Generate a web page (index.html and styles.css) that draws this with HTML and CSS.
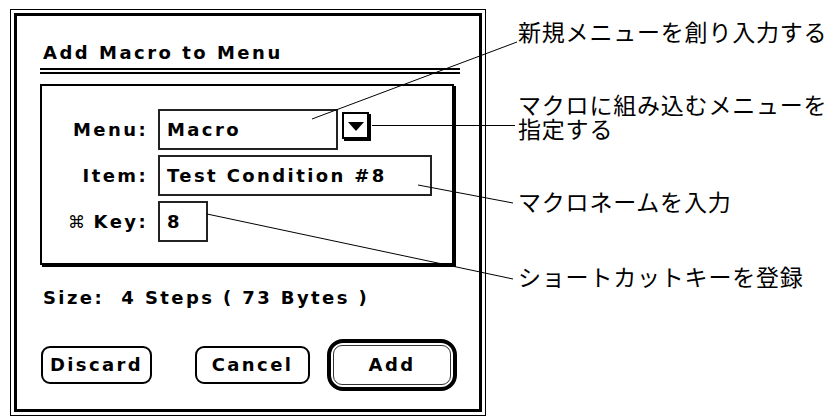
FILE: index.html
```html
<!DOCTYPE html>
<html lang="ja">
<head>
<meta charset="utf-8">
<link rel="stylesheet" href="styles.css">
</head>
<body>
<div class="dialog">
  <div class="frame">
    <div class="title">Add Macro to Menu</div>
    <div class="rule"></div>
    <div class="group">
      <div class="row">
        <div class="label">Menu:</div>
        <div class="field menu-field">Macro</div>
        <div class="popup">
          <svg width="16" height="10" viewBox="0 0 16 10"><polygon points="0,0 16,0 8,9" fill="#000"/></svg>
        </div>
      </div>
      <div class="row">
        <div class="label">Item:</div>
        <div class="field item-field">Test Condition #8</div>
      </div>
      <div class="row">
        <div class="label"><span class="cmd">⌘</span> Key:</div>
        <div class="field key-field">8</div>
      </div>
    </div>
    <div class="size">Size:&nbsp; 4 Steps ( 73 Bytes )</div>
    <div class="buttons">
      <div class="btn discard">Discard</div>
      <div class="btn cancel">Cancel</div>
      <div class="default"><div class="btn add">Add</div></div>
    </div>
  </div>
</div>
<div class="notes">
  <div class="note n1">新規メニューを創り入力する</div>
  <div class="note n2">マクロに組み込むメニューを</div>
  <div class="note n2b">指定する</div>
  <div class="note n3">マクロネームを入力</div>
  <div class="note n4">ショートカットキーを登録</div>
</div>
<svg class="leaders" width="830" height="416" viewBox="0 0 830 416">
  <g stroke="#000" stroke-width="1" fill="none">
    <line x1="312" y1="119" x2="517" y2="42"/>
    <line x1="372" y1="125.5" x2="515" y2="125.5"/>
    <line x1="418" y1="185" x2="513" y2="203"/>
    <line x1="207" y1="214" x2="513" y2="279"/>
  </g>
</svg>
</body>
</html>
```
FILE: styles.css
```css
html, body {
  margin: 0;
  padding: 0;
  background: #fff;
}
body {
  width: 830px;
  height: 416px;
  position: relative;
  overflow: hidden;
  display: flex;
  align-items: flex-start;
  font-family: "DejaVu Sans", "Liberation Sans", sans-serif;
  color: #000;
}
.dialog {
  box-sizing: border-box;
  margin: 9px 0 0 10px;
  width: 476px;
  height: 407px;
  border: 1px solid #000;
  padding: 3px;
  flex: none;
}
.frame {
  box-sizing: border-box;
  height: 100%;
  border: 3px solid #000;
  display: flex;
  flex-direction: column;
}
.title {
  margin: 26px 0 0 26px;
  font-weight: bold;
  font-size: 18px;
  line-height: 22px;
  letter-spacing: 2.5px;
}
.rule {
  margin: 4px 0 0 23px;
  width: 420px;
  height: 2px;
  border-top: 2px solid #000;
  border-bottom: 2px solid #000;
}
.group {
  box-sizing: border-box;
  margin: 10px 0 0 23px;
  width: 414px;
  height: 181px;
  border: 2px solid #000;
  box-shadow: 2px 2px 0 #000;
  padding-top: 23px;
  display: flex;
  flex-direction: column;
  gap: 5px;
}
.row {
  display: flex;
  align-items: flex-start;
  height: 41px;
}
.label {
  width: 106px;
  margin-right: 10px;
  text-align: right;
  font-weight: bold;
  font-size: 18px;
  line-height: 41px;
  letter-spacing: 2.4px;
  flex: none;
  white-space: nowrap;
}
.cmd {
  font-weight: normal;
  font-size: 17px;
  letter-spacing: 0;
}
.field {
  box-sizing: border-box;
  height: 41px;
  border: 2px solid #222;
  padding-left: 7px;
  font-weight: bold;
  font-size: 18px;
  line-height: 37px;
  letter-spacing: 2.4px;
  white-space: nowrap;
  flex: none;
}
.menu-field { width: 180px; }
.item-field { width: 274px; }
.key-field { width: 50px; }
.popup {
  box-sizing: border-box;
  margin: 3px 0 0 4px;
  width: 27px;
  height: 27px;
  border: 2px solid #000;
  box-shadow: 2px 2px 0 #000;
  display: flex;
  justify-content: center;
  padding-top: 8px;
}
.size {
  margin: 22px 0 0 26px;
  font-weight: bold;
  font-size: 18px;
  line-height: 22px;
  letter-spacing: 2.4px;
  white-space: nowrap;
}
.buttons {
  margin: 30px 0 0 24px;
  display: flex;
  align-items: center;
  height: 52px;
}
.btn {
  box-sizing: border-box;
  height: 38px;
  border: 2px solid #000;
  border-radius: 9px;
  text-align: center;
  font-weight: bold;
  font-size: 18px;
  line-height: 34px;
  letter-spacing: 2.4px;
}
.discard { width: 111px; }
.cancel { width: 115px; margin-left: 43px; }
.default {
  box-sizing: border-box;
  margin-left: 17px;
  width: 130px;
  height: 52px;
  border: 4px solid #000;
  border-radius: 16px;
  padding: 2px;
}
.add {
  width: 100%;
  height: 40px;
  border-width: 1.5px;
  border-color: #333;
  line-height: 37px;
  border-radius: 9px;
}
.notes {
  margin-left: 32px;
  display: flex;
  flex-direction: column;
  font-family: "Noto Sans CJK JP", sans-serif;
  font-size: 23px;
  line-height: 24px;
  letter-spacing: 0.8px;
  white-space: nowrap;
}
.n1 { margin-top: 19px; }
.n2 { margin-top: 49px; }
.n2b { margin-top: 0; }
.n3 { margin-top: 49px; }
.n4 { margin-top: 51px; }
.leaders {
  position: absolute;
  left: 0;
  top: 0;
  pointer-events: none;
}
```
